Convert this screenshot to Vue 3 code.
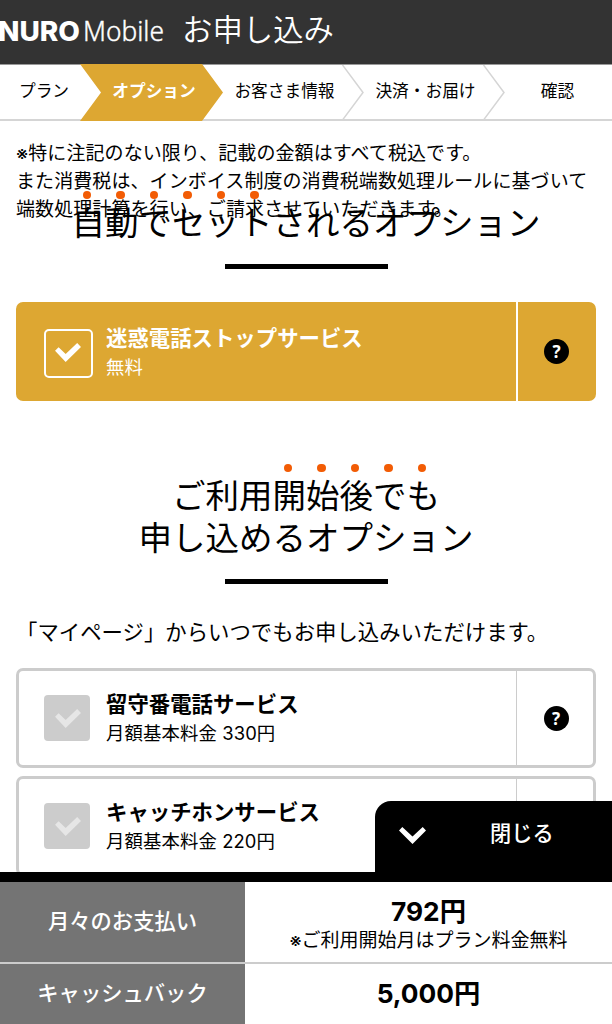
<script setup>
const steps = [
  { label: 'プラン' },
  { label: 'オプション', active: true },
  { label: 'お客さま情報' },
  { label: '決済・お届け' },
  { label: '確認' },
];

const paidOptions = [
  { name: '留守番電話サービス', price: '月額基本料金 330円' },
  { name: 'キャッチホンサービス', price: '月額基本料金 220円' },
];

const checkPoints = '0,7.7 3.5,4.1 10.4,10.8 21.7,0 25.4,3.8 10.4,18.6';
</script>

<template>
  <div class="page">
    <header class="header">
      <svg class="logo" width="168" height="64" viewBox="0 0 168 64" aria-label="NURO Mobile">
        <text class="logo-nuro" x="-2" y="40.5" textLength="82" lengthAdjust="spacingAndGlyphs">NURO</text>
        <text class="logo-mobile" x="83" y="40.5" textLength="81" lengthAdjust="spacingAndGlyphs">Mobile</text>
      </svg>
      <h1>お申し込み</h1>
    </header>

    <ol class="steps">
      <li v-for="(step, ind) in steps" :key="step.label" :class="{ active: step.active }">
        <span>{{ step.label }}</span>
        <svg v-if="ind > 1 && ind < 4" class="arrow" width="22" height="55" viewBox="0 0 22 55">
          <path d="M0.5 0L21 27.5L0.5 55" />
        </svg>
      </li>
    </ol>

    <main>
      <p class="note">
        ※特に注記のない限り、記載の金額はすべて税込です。<br />
        また消費税は、インボイス制度の消費税端数処理ルールに基づいて<br />
        端数処理計算を行い、ご請求させていただきます。
      </p>

      <h2><span v-for="(c, ind) in '自動でセット'" :key="ind" class="dot">{{ c }}</span>されるオプション</h2>

      <section class="card selected">
        <div class="card-body">
          <div class="check">
            <svg width="26" height="19" viewBox="0 0 25.4 18.6"><polygon :points="checkPoints" /></svg>
          </div>
          <div>
            <h3>迷惑電話ストップサービス</h3>
            <p class="price">無料</p>
          </div>
        </div>
        <div class="help"><span>?</span></div>
      </section>

      <h2 class="later">ご利用<span v-for="(c, ind) in '開始後でも'" :key="ind" class="dot">{{ c }}</span><br />申し込めるオプション</h2>

      <p class="lead">「マイページ」からいつでもお申し込みいただけます。</p>

      <section v-for="option in paidOptions" :key="option.name" class="card">
        <div class="card-body">
          <div class="check">
            <svg width="26" height="19" viewBox="0 0 25.4 18.6"><polygon :points="checkPoints" /></svg>
          </div>
          <div>
            <h3>{{ option.name }}</h3>
            <p class="price">{{ option.price }}</p>
          </div>
        </div>
        <div class="help"><span>?</span></div>
      </section>
    </main>

    <footer class="total">
      <button class="close">
        <svg width="27" height="17" viewBox="0 0 27 17">
          <polygon points="0,3.5 3.3,0 13.5,9.5 23.7,0 27,3.5 13.5,17" />
        </svg>
        <span>閉じる</span>
      </button>
      <dl>
        <dt>月々のお支払い</dt>
        <dd>
          <strong>792円</strong>
          <small>※ご利用開始月はプラン料金無料</small>
        </dd>
        <dt>キャッシュバック</dt>
        <dd><strong>5,000円</strong></dd>
      </dl>
    </footer>
  </div>
</template>

<style>
body {
  margin: 0;
  overflow: hidden;
}
</style>

<style scoped>
.page {
  position: relative;
  width: 612px;
  height: 1024px;
  overflow: hidden;
  background: #fff;
  color: #000;
  font-family: Inter, "Noto Sans CJK JP", sans-serif;
}
h1, h2, h3, p, ol, dl, dd {
  margin: 0;
  padding: 0;
}
.header {
  display: flex;
  height: 64px;
  background: #333;
  color: #fff;
}
.logo {
  fill: #fff;
}
.logo-nuro {
  font: 800 27px Inter, sans-serif;
}
.logo-mobile {
  font: 300 27px "Noto Sans", sans-serif;
  stroke: #fff;
  stroke-width: 0.4px;
}
h1 {
  margin-left: 14px;
  font-size: 30.4px;
  font-weight: 350;
  line-height: 60px;
}
.steps {
  display: grid;
  grid-template-columns: 80px 122px 141px 141px 128px;
  height: 54px;
  border-top: 1px solid #999;
  border-bottom: 2px solid #d5d5d5;
  list-style: none;
  font-size: 16.7px;
  line-height: 52px;
  text-align: center;
}
.steps li {
  position: relative;
  padding-left: 24px;
  white-space: nowrap;
}
.steps li:first-child {
  padding-left: 8px;
}
.steps li:last-child {
  padding-left: 19px;
}
.steps span {
  position: relative;
}
.steps .active {
  padding-left: 26px;
  color: #fff;
  font-weight: 700;
}
.active::before {
  content: "";
  position: absolute;
  inset: -1px -21px -2px 0;
  background: #dda732;
  clip-path: polygon(0 0, 122px 0, 100% 50%, 122px 100%, 0 100%, 21px 50%);
}
.arrow {
  position: absolute;
  top: 0;
  right: -21px;
  fill: none;
  stroke: #d5d5d5;
  stroke-width: 1.5;
}
main {
  padding: 0 16px;
}
.note {
  height: 59px;
  padding-top: 19px;
  font-size: 19px;
  line-height: 28px;
  letter-spacing: 0.08px;
  white-space: nowrap;
}
h2 {
  position: relative;
  padding-top: 3px;
  font-size: 33.5px;
  font-weight: 400;
  line-height: 42px;
  text-align: center;
}
h2::after {
  content: "";
  display: block;
  width: 163px;
  height: 5px;
  margin: 20px auto 0;
  background: #000;
}
.dot {
  position: relative;
}
.dot::before {
  content: "";
  position: absolute;
  top: -12.5px;
  left: 11px;
  width: 8.5px;
  height: 8.5px;
  border-radius: 50%;
  background: #f25c05;
}
.later {
  margin-top: 71px;
}
.lead {
  margin: 32px 0 20px;
  font-size: 21.4px;
  line-height: 32px;
  white-space: nowrap;
}
.card {
  display: flex;
  box-sizing: border-box;
  height: 100px;
  margin-bottom: 8px;
  border: 3px solid #ccc;
  border-radius: 7px;
}
.card-body {
  display: flex;
  flex: 1;
  padding: 24px 0 0 25px;
}
.check {
  box-sizing: border-box;
  width: 46px;
  height: 46px;
  margin-right: 16px;
  padding: 14px 0 0 11px;
  border-radius: 4px;
  background: #ccc;
  fill: #e6e6e6;
}
.check svg {
  display: block;
}
h3 {
  margin-top: -6px;
  font-size: 21.4px;
  font-weight: 700;
  line-height: 31px;
}
.price {
  font-size: 18.4px;
  line-height: 27px;
  letter-spacing: 0.1px;
}
.help {
  display: flex;
  align-items: center;
  justify-content: center;
  box-sizing: border-box;
  width: 77px;
  padding-left: 2px;
  border-left: 1px solid #ccc;
}
.help span {
  width: 25px;
  height: 25px;
  border-radius: 50%;
  background: #000;
  color: #fff;
  font: 700 17px/25px "Noto Sans", sans-serif;
  text-align: center;
}
.selected {
  height: 99px;
  margin-top: 33px;
  border-color: #dda732;
  background: #dda732;
  color: #fff;
}
.selected .check {
  width: 49px;
  height: 49px;
  margin-right: 13px;
  padding: 12px 0 0 9px;
  border: 2px solid #fff;
  border-radius: 5px;
  background: none;
  fill: #fff;
}
.selected .help {
  margin: -3px 0;
  border-left: 2px solid #fff;
}
.total {
  position: absolute;
  right: 0;
  bottom: 0;
  left: 0;
}
.close {
  display: flex;
  box-sizing: border-box;
  width: 237px;
  height: 71px;
  margin-left: auto;
  padding: 0 0 0 24px;
  border: 0;
  border-radius: 16px 0 0 0;
  background: #000;
  color: #fff;
  font: 500 21.2px/65px Inter, "Noto Sans CJK JP", sans-serif;
}
.close svg {
  margin: 26px 64px 0 0;
  fill: #fff;
}
dl {
  display: grid;
  grid-template-columns: 245px 1fr;
  grid-template-rows: 80px 62px;
  border-top: 10px solid #000;
  background: #fff;
}
dt {
  background: #747474;
  color: #fff;
  font-size: 21.3px;
  font-weight: 500;
  line-height: 79px;
  text-align: center;
}
dd {
  padding-top: 14px;
  text-align: center;
}
dt:nth-of-type(2),
dd:nth-of-type(2) {
  border-top: 2px solid #ccc;
  line-height: 59px;
}
strong {
  display: block;
  font-size: 26.3px;
  font-weight: 700;
  line-height: 32px;
}
small {
  display: block;
  font-size: 19px;
  line-height: 26px;
}
</style>
